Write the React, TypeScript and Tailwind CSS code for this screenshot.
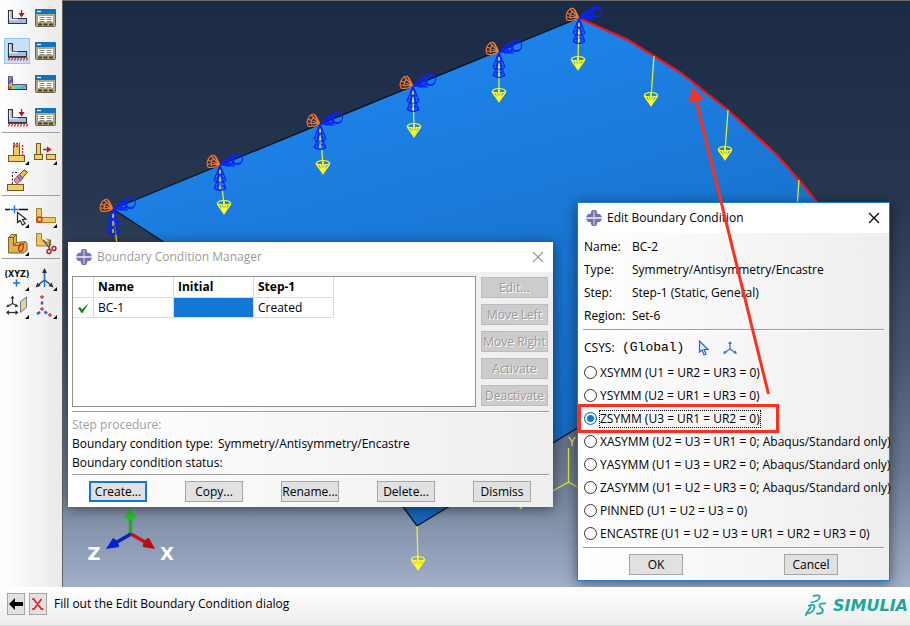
import { useState } from "react";
import type { ReactNode } from "react";

/* ---------- Toolbar icons (26 x 26 grid) ---------- */

function Icon({ children, more = false }: { children: ReactNode; more?: boolean }) {
  return (
    <svg viewBox="0 0 26 26" className="block size-full" aria-hidden="true">
      {children}
      {more && <path d="M25 21v4h-4z" fill="#000" />}
    </svg>
  );
}

const Bracket = ({ fill = "#a9bce0" }: { fill?: string }) => (
  <>
    <path d="M4.500 5.500h4v8h14v5h-18z" fill={fill} stroke="#33333a" strokeWidth="1.100" />
    <path d="M5.700 6.500v8h8" fill="none" stroke="#e4ebf8" strokeWidth="1.300" />
  </>
);

const LoadArrow = () => (
  <path d="M17.500 5v6M15.500 8.500l2 3 2-3z" fill="#b01818" stroke="#b01818" strokeWidth="1.200" />
);

const Hatch = () => (
  <path d="M4 19.500h19M5.500 20l-1 2.500M8.500 20l-1 2.500M11.500 20l-1 2.500M14.500 20l-1 2.500M17.500 20l-1 2.500M20.500 20l-1 2.500M23.500 20l-1 2.500" stroke="#c02020" strokeWidth="1.200" fill="none" />
);

const LoadIcon = () => <Icon><Bracket /><LoadArrow /></Icon>;
const BoundaryIcon = () => <Icon><Bracket /><Hatch /></Icon>;
const LoadCaseIcon = () => <Icon><Bracket /><LoadArrow /><Hatch /></Icon>;

const FieldIcon = () => (
  <Icon>
    <path d="M4.500 5.500h4v8h14v5h-18z" fill="#5fd6b4" stroke="#55555a" strokeWidth="1" />
    <path d="M5 12l3.500-4" stroke="#5a48f0" strokeWidth="2" />
    <path d="M5 8l3-2.500" stroke="#b060f0" strokeWidth="1.500" />
    <path d="M5 15l3-3" stroke="#90e060" strokeWidth="1.500" />
    <path d="M5 18l4-4" stroke="#f05030" strokeWidth="2" />
    <path d="M10 18l-3-4" stroke="#f0b040" strokeWidth="1.500" />
    <path d="M11 14l4 4 4-4" stroke="#30c8f0" strokeWidth="1.500" fill="none" />
    <path d="M18 18l4-4" stroke="#c060e8" strokeWidth="1.500" />
    <path d="M4 18.500h19M22.500 14v5" stroke="#333" />
  </Icon>
);

const ManagerIcon = () => (
  <Icon>
    <rect x="3.500" y="4.500" width="20" height="17" rx="1" fill="#b5aa7d" stroke="#6b6345" />
    <rect x="3" y="4" width="21" height="5" rx="1" fill="#1273bd" />
    <path d="M5 6.500h4" stroke="#fff" strokeWidth="1.200" />
    <rect x="5.500" y="10.500" width="16" height="7" fill="#fff" stroke="#b0a67c" />
    <path d="M7.500 12.500h5M7.500 14.500h5M7.500 16.500h5M14.500 12.500h5M14.500 14.500h5M14.500 16.500h5" stroke="#777" strokeWidth=".9" />
    <path d="M6 19.500h4M11.500 19.500h4M17 19.500h4" stroke="#4c3d2c" strokeWidth="2" />
  </Icon>
);

const Y = "#f3cf63";
const YS = "#6e5a20";

const StepReplaceIcon = () => (
  <Icon more>
    <rect x="9.500" y="5" width="6" height="11" fill={Y} stroke={YS} />
    <rect x="4.500" y="15.500" width="16" height="6" fill={Y} stroke={YS} />
    <path d="M9 3.500h7M9 6.500h7M18.500 5v10" stroke="#e02020" strokeWidth="1.300" strokeDasharray="2 1" />
  </Icon>
);
const StepMoveIcon = () => (
  <Icon more>
    <rect x="4.500" y="3.500" width="4" height="11" fill={Y} stroke={YS} />
    <rect x="2.500" y="14.500" width="8" height="5" fill={Y} stroke={YS} />
    <rect x="14.500" y="14.500" width="9" height="5" fill={Y} stroke={YS} />
    <path d="M11 9.500h5M15.500 7.500l3 2-3 2z" stroke="#d01818" strokeWidth="1.400" fill="#d01818" />
  </Icon>
);
const EraseIcon = () => (
  <Icon>
    <path d="M8.500 16V4.500H15" fill="none" stroke="#222" strokeDasharray="2 1.500" />
    <rect x="3.500" y="16.500" width="16" height="6" fill={Y} stroke={YS} />
    <path d="M15 7l5-5 3.500 2-5 6z" fill="#f4bd4d" stroke="#5a4a30" />
    <path d="M13 8.500l2.500-2 3.500 3.500-2.500 3z" fill="#8a8fc0" stroke="#4a4a60" strokeWidth=".8" />
    <path d="M10.500 11l2.500-2.500 3.500 4.500-3 2.500c-2 0-3.500-2-3-4.500z" fill="#ef8b98" stroke="#7d4450" strokeWidth=".8" />
  </Icon>
);
const DatumPickIcon = () => (
  <Icon more>
    <path d="M1 6.500h5M15 6.500h9" stroke="#111" strokeWidth="1.300" />
    <path d="M10.500 2.500v8M6.500 6.500h8" stroke="#1877e0" strokeWidth="1.400" />
    <path d="M13.500 9.500v10l2.500-2 2.500 4.500 2.500-1.500-2.500-4 3.500-.5z" fill="#fff" stroke="#222" strokeWidth="1.200" />
  </Icon>
);
const PartitionEdgeIcon = () => (
  <Icon more>
    <path d="M4.500 5.500h5v9h14v5h-19z" fill="#f5c65c" stroke="#a08038" />
    <circle cx="7.500" cy="16.500" r="2.500" fill="none" stroke="#e02a18" strokeWidth="1.300" />
  </Icon>
);
const PartitionCellIcon = () => (
  <Icon more>
    <path d="M4.500 6.500l3-3h5v8l9-1 1.500 2v7l-4 2.500H4.500z" fill="#e0b24a" stroke="#6b5726" strokeWidth=".9" />
    <path d="M4.500 6.500h5v8h8l4-3.500M9.500 6.500l3-3M9.500 14.500l3-3" fill="none" stroke="#6b5726" strokeWidth=".9" />
    <ellipse cx="17" cy="16.500" rx="2.200" ry="4" transform="rotate(12 17 16.500)" fill="none" stroke="#d42412" strokeWidth="1.300" />
  </Icon>
);
const CutIcon = () => (
  <Icon>
    <path d="M4.500 2.500h5v6l10 5-3 1.500H4.500z" fill="#f5c05a" stroke="#a08038" />
    <path d="M14 7.500l5 1v6z" fill="#c98a26" />
    <path d="M11 9l7 8.500M18.500 9L17 18" stroke="#555" strokeWidth="1.300" />
    <circle cx="17" cy="20.500" r="2" fill="none" stroke="#a81818" strokeWidth="1.300" />
    <circle cx="22" cy="17.500" r="2" fill="none" stroke="#a81818" strokeWidth="1.300" />
  </Icon>
);
const XyzIcon = () => (
  <Icon more>
    <text x="13" y="11" textAnchor="middle" fontFamily="DejaVu Sans" fontWeight="700" fontSize="8" fill="#111">(XYZ)</text>
    <path d="M12.500 13.500v7M9 17h7" stroke="#1877e0" strokeWidth="1.600" />
  </Icon>
);
const AxesIcon = () => (
  <Icon more>
    <path d="M12.500 3v12M5 20l7.500-6 8 6" stroke="#333" strokeWidth="1.300" fill="none" />
    <path d="M12.500 5v16" stroke="#1877e0" strokeWidth="1.400" />
    <path d="M10 7l2.500-5L15 7zM3.500 21.500l2-5 3 3.500zM21.500 21.500l-5-1.500 3-3.500z" fill="#333" />
  </Icon>
);
const PlaneIcon = () => (
  <Icon more>
    <path d="M8.500 9.500V3.500M8.500 9.500l-5 3M8.500 9.500l5 2.500" stroke="#333" strokeWidth="1.200" />
    <path d="M6.500 4.500l2-3 2 3zM2 13.500l2-3.500 1.500 2.500zM14.500 12.500l-4 .5 1.500-3z" fill="#333" />
    <path d="M16.500 7.500l6-4.500v10.500l-6 5z" fill="#f6cf7e" stroke="#5c7ea0" />
    <path d="M4 18.500h9" stroke="#333" strokeWidth="1.300" />
    <path d="M2 18.500l3-2.500v5zM14.500 18.500l-3-2.500v5z" fill="#333" />
  </Icon>
);
const CsysIcon = () => (
  <Icon more>
    <path d="M10 1v4M8 3h4M10 13v4M8 15h4M18 19v4M16 21h4" stroke="#e23a3a" strokeWidth="1.300" />
    <path d="M10 7.500v3M5 20l3-2M12.500 17.500l2.500 2" stroke="#1668c8" strokeWidth="2.400" />
  </Icon>
);

type Tool = { name: string; icon: ReactNode; active?: boolean };

const toolGroups: Tool[][] = [
  [
    { name: "Create Load", icon: <LoadIcon /> },
    { name: "Load Manager", icon: <ManagerIcon /> },
    { name: "Create Boundary Condition", icon: <BoundaryIcon />, active: true },
    { name: "Boundary Condition Manager", icon: <ManagerIcon /> },
    { name: "Create Predefined Field", icon: <FieldIcon /> },
    { name: "Predefined Field Manager", icon: <ManagerIcon /> },
    { name: "Create Load Case", icon: <LoadCaseIcon /> },
    { name: "Load Case Manager", icon: <ManagerIcon /> },
  ],
  [
    { name: "Resume Features", icon: <StepReplaceIcon /> },
    { name: "Move Features", icon: <StepMoveIcon /> },
    { name: "Delete Feature", icon: <EraseIcon /> },
  ],
  [
    { name: "Select Datum", icon: <DatumPickIcon /> },
    { name: "Partition Edge", icon: <PartitionEdgeIcon /> },
    { name: "Partition Cell", icon: <PartitionCellIcon /> },
    { name: "Cut Geometry", icon: <CutIcon /> },
  ],
  [
    { name: "Create Datum Point", icon: <XyzIcon /> },
    { name: "Create Datum Axis", icon: <AxesIcon /> },
    { name: "Create Datum Plane", icon: <PlaneIcon /> },
    { name: "Create Datum CSYS", icon: <CsysIcon /> },
  ],
];

function Toolbar() {
  return (
    <aside className="w-[62px] shrink-0 bg-gradient-to-r from-white to-[#eaeaea] pt-[5px]">
      {toolGroups.map((group, i) => (
        <div key={i} className={i === 0 ? "" : "mx-0.5 border-t border-[#9c9c9c] pt-[7px]"}>
          <div
            className={
              i === 0
                ? "grid grid-cols-[26px_26px] gap-x-0.5 gap-y-[7px] pb-0.5 pl-1"
                : "grid grid-cols-[26px_26px] gap-x-0.5 gap-y-0.5 pb-px pl-0.5"
            }
          >
            {group.map((tool) => (
              <button
                key={tool.name}
                type="button"
                aria-label={tool.name}
                className={tool.active ? "size-[26px] bg-[#c6e0f8] outline-1 -outline-offset-1 outline-[#90c8f6]" : "size-[26px]"}
              >
                {tool.icon}
              </button>
            ))}
          </div>
        </div>
      ))}
    </aside>
  );
}

/* ---------- 3D viewport ---------- */

type Pt = [number, number];

const supports: { at: Pt; tip: Pt }[] = [
  { at: [113, 209], tip: [118, 262] },
  { at: [220, 165], tip: [224, 214] },
  { at: [320, 124], tip: [323, 174] },
  { at: [413, 86], tip: [414, 137] },
  { at: [499, 52], tip: [499, 102] },
  { at: [579, 18], tip: [578, 70] },
];

const loads: { at: Pt; tip: Pt }[] = [
  { at: [654, 56], tip: [651, 106] },
  { at: [728, 110], tip: [725, 160] },
  { at: [799, 180], tip: [796, 230] },
  { at: [417, 526], tip: [418, 570] },
  { at: [521, 470], tip: [521, 509] },
];

function LoadSymbol({ at, tip }: { at: Pt; tip: Pt }) {
  return (
    <g stroke="#ffff20" fill="none">
      <line x1={at[0]} y1={at[1]} x2={tip[0]} y2={tip[1] - 8} strokeWidth="1.3" opacity=".85" />
      <g transform={`translate(${tip[0]} ${tip[1]})`}>
        <path d="M-6.500-10L0-.5 6.500-10M-3-10L0-1 3-10M0-13V-1" strokeWidth="1.500" />
        <path d="M-7-10.500c2-4 12-4 14 0M-7-10.500c2 2 12 2 14 0" strokeWidth="1.100" />
      </g>
    </g>
  );
}

function SupportSymbol({ at }: { at: Pt }) {
  return (
    <g transform={`translate(${at[0]} ${at[1]})`} fill="none" strokeWidth="1.100">
      <path
        stroke="#ff7a28"
        d="M0 0L-4-8C-6-11-9-10-11-7-13-4-13 0-12 2-9 3-4 2 0 0zM0 0L-9-9M0 0L-12-5M0 0L-12-1M0 0L-6-10M-7-6c-2 2-2 5-1 7"
      />
      <g stroke="#0a24f5">
        <path d="M0 0L16-12M0 0L15 1M0 0L20-10M0 0L21-2M0 0L10-9M0 0L12-2M0 0L14-6M5 1h10M14-11c-3 3-3 8 1 11" />
        <ellipse cx="18" cy="-6" rx="4.500" ry="5.500" transform="rotate(12 18 -6)" />
        <ellipse cx="11" cy="-4" rx="2.500" ry="4.500" transform="rotate(10 11 -4)" />
        <path d="M0 0L-6 15M0 0L6 15M0 0L-3 17M0 0L3 17M0 8L-6 24M0 8L6 24M-2 14v11M2 14v11M-6 24h3M3 24h3M-4 9h8" />
        <ellipse cx="0" cy="15" rx="5.500" ry="2" />
        <ellipse cx="0" cy="23" rx="5" ry="2.500" />
      </g>
      <path d="M0 5v4M0 12v5M0 20v4" stroke="#ffff20" />
    </g>
  );
}

function Scene() {
  return (
    <svg
      viewBox="62 0 848 587"
      preserveAspectRatio="xMinYMin slice"
      className="absolute inset-0 size-full"
      role="img"
      aria-label="Meshed plate with boundary conditions and loads"
    >
      <defs>
        <linearGradient id="sky" x1="0" y1="0" x2="0" y2="1">
          <stop offset="0" stopColor="#1b2b46" />
          <stop offset=".35" stopColor="#27374f" />
          <stop offset=".6" stopColor="#46556e" />
          <stop offset=".8" stopColor="#6a7992" />
          <stop offset="1" stopColor="#a1aec7" />
        </linearGradient>
        <linearGradient id="plate" gradientUnits="userSpaceOnUse" x1="380" y1="80" x2="500" y2="520">
          <stop offset="0" stopColor="#1d82e8" />
          <stop offset="1" stopColor="#1566b8" />
        </linearGradient>
      </defs>
      <rect x="62" width="848" height="587" fill="url(#sky)" />
      <path
        d="M113 209L579 18l49 22 26 16 27 17 47 37 48 44 42 48 30 60-300 184-131 80-13-18-114-163-128-104z"
        fill="url(#plate)"
        stroke="#0b1424"
        strokeWidth="1.300"
      />
      <path d="M579 18l49 22 26 16 27 17 47 37 48 44 23 26 19 23" fill="none" stroke="#f8101c" strokeWidth="2.200" />
      {[...supports, ...loads].map((s) => (
        <LoadSymbol key={`${s.at}`} at={s.at} tip={s.tip} />
      ))}
      {supports.map((s) => (
        <SupportSymbol key={`${s.at}`} at={s.at} />
      ))}
      <path d="M568.500 448v34l-16 9M568.500 482l14 8" fill="none" stroke="#e8e830" strokeWidth="1.300" />
      <text x="572" y="446" textAnchor="middle" fontFamily="Liberation Mono" fontSize="13" fill="#f0f030">Y</text>
      <path d="M130.500 535v-19" stroke="#1fae24" strokeWidth="3.500" />
      <path d="M125 518l5.500-11 5.500 11c-3 2-8 2-11 0z" fill="#22c32a" />
      <path d="M131 534l-14 8" stroke="#0a1fb4" strokeWidth="3.500" />
      <path d="M106 549l7-11c3 1 6 5 6 9z" fill="#0820d0" />
      <path d="M131 534l14 8" stroke="#d01018" strokeWidth="3.500" />
      <path d="M155 549l-6-11c-4 1-7 5-6 9z" fill="#b80c14" />
      <g fontFamily="DejaVu Sans" fontWeight="700" fontSize="18" fill="#fff" textAnchor="middle">
        <text x="94" y="560">Z</text>
        <text x="167" y="560">X</text>
      </g>
      <path d="M62.500 0v587" stroke="#5f5f5f" />
      <path d="M62 .5h848" stroke="#6d6d6d" />
    </svg>
  );
}

/* ---------- Dialog parts ---------- */

const DialogGlyph = () => (
  <svg viewBox="0 0 16 16" className="size-4 shrink-0" aria-hidden="true">
    <path d="M6 0h4l1 2 .5 2H14l2 3v2l-2 3h-2.500L11 14l-1 2H6l-1-2-.5-2H2L0 9V7l2-3h2.500L5 2z" fill="#7472ac" />
    <path d="M7 1h2v14H7z" fill="#a9a7cd" />
    <path d="M0 8h16" stroke="#f0f0f8" strokeWidth="1.500" />
  </svg>
);

const Rule = ({ className = "" }: { className?: string }) => (
  <hr className={`h-0.5 border-0 border-t border-b border-t-[#9c9c9c] border-b-white ${className}`} />
);

function TitleBar({ title, muted = false, className }: { title: string; muted?: boolean; className: string }) {
  return (
    <header className={`flex items-center bg-white ${className}`}>
      <DialogGlyph />
      <h2 className={muted ? "flex-1 pl-[5px] text-[#9b9b9b]" : "flex-1 pl-[5px]"}>{title}</h2>
      <button type="button" aria-label={`Close ${title}`} className={muted ? "text-[#999]" : "text-black"}>
        <svg viewBox="0 0 12 12" className="size-3" aria-hidden="true">
          <path d="M1 1l10 10M11 1L1 11" stroke="currentColor" strokeWidth="1.200" />
        </svg>
      </button>
    </header>
  );
}

const sideActions = ["Edit...", "Move Left", "Move Right", "Activate", "Deactivate"];
const bottomActions = ["Create...", "Copy...", "Rename...", "Delete...", "Dismiss"];

function ManagerDialog() {
  return (
    <section className="absolute top-[242px] left-1.5 w-[485px] bg-gradient-to-r from-white to-[#eeeeee] shadow-[0_2px_12px_rgba(0,0,0,0.5)]">
      <TitleBar title="Boundary Condition Manager" muted className="h-[30px] pr-[9px] pl-2" />
      <div className="px-1 pt-1">
        <div className="flex gap-[5px]">
          <div className="flex-1 border border-[#909090] bg-white">
            <table className="table-fixed border-separate border-spacing-0">
              <thead>
                <tr className="h-[21px] text-left">
                  <th className="w-[21px] border-r border-b border-[#dcdcdc]" aria-label="Active" />
                  <th className="w-20 border-r border-b border-[#dcdcdc] px-1">Name</th>
                  <th className="w-20 border-r border-b border-[#dcdcdc] px-1">Initial</th>
                  <th className="w-20 border-r border-b border-[#dcdcdc] px-1">Step-1</th>
                </tr>
              </thead>
              <tbody>
                <tr className="h-5">
                  <td className="border-r border-b border-[#dcdcdc] pl-[5px]">
                    <svg viewBox="0 0 12 10" className="h-2.5 w-3" aria-label="Active">
                      <path d="M0 5l2-1 2 2.500L11 0 4.500 10H3.500z" fill="#128a18" />
                    </svg>
                  </td>
                  <td className="border-r border-b border-[#dcdcdc] px-1">BC-1</td>
                  <td className="border-r border-b border-[#dcdcdc] bg-[#1478d7] bg-clip-padding" />
                  <td className="border-r border-b border-[#dcdcdc] px-1">Created</td>
                </tr>
              </tbody>
            </table>
          </div>
          <div className="flex w-[68px] flex-col gap-1.5 pt-px pr-px pb-px">
            {sideActions.map((a) => (
              <button
                key={a}
                type="button"
                disabled
                className="flex h-[21px] items-center justify-center border border-[#bcbcbc] bg-[#cccccc] whitespace-nowrap text-[#9a9a9a] [text-shadow:1px_1px_0_#fff]"
              >
                {a}
              </button>
            ))}
          </div>
        </div>
        <Rule className="mt-1" />
        <dl className="pt-0.5 leading-[19px]">
          <dt className="text-[#a0a0a0]">Step procedure:</dt>
          <div className="flex">
            <dt className="w-[146px]">Boundary condition type:</dt>
            <dd>Symmetry/Antisymmetry/Encastre</dd>
          </div>
          <dt>Boundary condition status:</dt>
        </dl>
        <Rule className="mt-0.5" />
      </div>
      <footer className="flex justify-between pt-[5px] pr-[22px] pb-[5px] pl-[21px]">
        {bottomActions.map((a, i) => (
          <button
            key={a}
            type="button"
            className={
              i === 0
                ? "flex h-[21px] w-[58px] items-center justify-center border-2 border-[#1478d7] bg-[#e1e1e1]"
                : "flex h-[21px] w-[58px] items-center justify-center border border-[#a6a6a6] bg-[#e1e1e1]"
            }
          >
            {a}
          </button>
        ))}
      </footer>
    </section>
  );
}

const details = [
  ["Name:", "BC-2"],
  ["Type:", "Symmetry/Antisymmetry/Encastre"],
  ["Step:", "Step-1 (Static, General)"],
  ["Region:", "Set-6"],
];

const options = [
  "XSYMM (U1 = UR2 = UR3 = 0)",
  "YSYMM (U2 = UR1 = UR3 = 0)",
  "ZSYMM (U3 = UR1 = UR2 = 0)",
  "XASYMM (U2 = U3 = UR1 = 0; Abaqus/Standard only)",
  "YASYMM (U1 = U3 = UR2 = 0; Abaqus/Standard only)",
  "ZASYMM (U1 = U2 = UR3 = 0; Abaqus/Standard only)",
  "PINNED (U1 = U2 = U3 = 0)",
  "ENCASTRE (U1 = U2 = U3 = UR1 = UR2 = UR3 = 0)",
];

function EditDialog() {
  const [selected, setSelected] = useState(2);
  return (
    <section className="absolute top-[202px] left-[515px] w-[313px] border border-[#1b7cd6] bg-gradient-to-r from-white to-[#eeeeee] shadow-[0_2px_12px_rgba(0,0,0,0.5)]">
      <TitleBar title="Edit Boundary Condition" className="h-[30px] pr-[9px] pl-2" />
      <div className="px-[5px] pt-0.5">
        <dl>
          {details.map(([k, v]) => (
            <div key={k} className="flex h-[23px] items-center pl-px">
              <dt className="w-12">{k}</dt>
              <dd>{v}</dd>
            </div>
          ))}
        </dl>
        <Rule className="mt-[2px]" />
        <div className="flex h-[30px] items-center pt-[3px] pl-px">
          <span className="w-[38px]">CSYS:</span>
          <span className="font-['Liberation_Mono',monospace] text-[13px]">(Global)</span>
          <button type="button" aria-label="Select CSYS" className="ml-3.5">
            <svg viewBox="0 0 12 16" className="h-4 w-3" aria-hidden="true">
              <path d="M1.500 1v11l2.500-2 2 5 2-1-2-4.500h4z" fill="#e8f0ff" stroke="#2860e0" strokeWidth="1.200" />
            </svg>
          </button>
          <button type="button" aria-label="Create datum CSYS" className="ml-3">
            <svg viewBox="0 0 16 16" className="size-4" aria-hidden="true">
              <path d="M8 2v7l-6 4M8 9l6 4" fill="none" stroke="#3f78b4" strokeWidth="1.300" />
              <path d="M6 4l2-3 2 3zM1 14l1.500-3.500L5 13zM15 14l-1.500-3.500L11 13z" fill="#3f78b4" />
            </svg>
          </button>
        </div>
        <fieldset>
          {options.map((o, i) => (
            <label key={o} className="flex h-[23px] items-center gap-[3px] pl-px whitespace-nowrap">
              <input
                type="radio"
                name="bc-type"
                checked={selected === i}
                onChange={() => setSelected(i)}
                className="size-[13px] shrink-0 appearance-none rounded-full border border-[#333] bg-white checked:border-[#1478d7] checked:bg-[#1478d7] checked:shadow-[inset_0_0_0_2px_#fff]"
              />
              <span className={selected === i ? "outline-1 outline-black outline-dotted" : ""}>{o}</span>
            </label>
          ))}
        </fieldset>
        <Rule className="mt-0.5" />
      </div>
      <footer className="flex justify-between px-[51px] pt-[5px] pb-[5px]">
        {["OK", "Cancel"].map((a) => (
          <button key={a} type="button" className="flex h-[21px] w-[54px] items-center justify-center border border-[#a6a6a6] bg-[#e1e1e1]">
            {a}
          </button>
        ))}
      </footer>
    </section>
  );
}

/* Red call-out drawn over the dialogs */
function Annotation() {
  return (
    <svg viewBox="62 0 848 587" preserveAspectRatio="xMinYMin slice" className="pointer-events-none absolute inset-0 size-full" aria-hidden="true">
      <rect x="579.500" y="405.500" width="198" height="26" fill="none" stroke="#fb3020" strokeWidth="3" />
      <path d="M768.500 394L696 100" stroke="#fb3020" strokeWidth="3" />
      <path d="M692.500 87l11 12.500-15 3.500z" fill="#fb3020" />
    </svg>
  );
}

function StatusBar() {
  return (
    <footer className="flex h-[39px] shrink-0 items-center gap-1 border-b border-[#d4d4d4] bg-gradient-to-b from-white to-[#ececec] pr-0.5 pb-1 pl-[7px]">
      <button type="button" aria-label="Previous" className="flex h-[22px] w-[18px] items-center justify-center border border-[#a6a6a6] bg-[#e1e1e1]">
        <svg viewBox="0 0 14 12" className="h-3 w-3.5" aria-hidden="true">
          <path d="M0 6l6-6v4h8v4H6v4z" fill="#000" />
        </svg>
      </button>
      <button type="button" aria-label="Cancel Procedure" className="flex h-[22px] w-[18px] items-center justify-center border border-[#a6a6a6] bg-[#e1e1e1]">
        <svg viewBox="0 0 12 12" className="size-3" aria-hidden="true">
          <path d="M1.500 1l8 10M9.500 1L2 11M0 11h3M8.500 11h3M0 1h2.500" stroke="#f01020" strokeWidth="1.600" />
        </svg>
      </button>
      <p className="flex-1 pl-[3px]">Fill out the Edit Boundary Condition dialog</p>
      <div className="flex items-center gap-1.5 pt-1 text-[#1aa89c]">
        <svg viewBox="0 0 22 24" className="h-6 w-[22px]" fill="none" stroke="currentColor" strokeWidth="1.700" aria-hidden="true">
          <path d="M8 2.500C11 .5 16 1 14.500 4 13.500 6.500 9.500 8 5.500 8.500" />
          <path d="M3 12c4-2 7-1.500 6.500 1.500C9 17 5.500 19.500 1.500 19.500L6 12.500M1.500 19.500l-1 2.500" />
          <path d="M21 9.500c-4-.5-7 .5-6.500 2.500.5 1.500 3.500 2.500 3.500 4.500 0 2.500-3 3.500-7 3" />
        </svg>
        <span className="font-['DejaVu_Sans',sans-serif] text-[16px] font-bold italic">SIMULIA</span>
      </div>
    </footer>
  );
}

export default function App() {
  return (
    <div className="flex h-screen flex-col overflow-hidden bg-white font-['Open_Sans','Noto_Sans',sans-serif] text-[12px] leading-4 text-black">
      <div className="flex min-h-0 flex-1">
        <Toolbar />
        <main className="relative min-w-0 flex-1 overflow-hidden">
          <Scene />
          <ManagerDialog />
          <EditDialog />
          <Annotation />
        </main>
      </div>
      <StatusBar />
    </div>
  );
}
